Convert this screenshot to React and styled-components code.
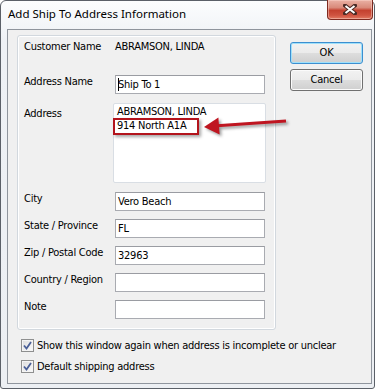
import React from "react";
import styled, { createGlobalStyle } from "styled-components";

const Global = createGlobalStyle`
  html, body { margin: 0; padding: 0; background: #ffffff; }
  body { width: 380px; height: 392px; overflow: hidden; }
`;

const ui = `"DejaVu Sans Condensed", "DejaVu Sans", sans-serif`;

const Window = styled.div`
  box-sizing: border-box;
  width: 375px;
  height: 389px;
  border: 1px solid #5b6068;
  border-radius: 6px 6px 3px 3px;
  background: linear-gradient(#fcfdfe, #eef1f5 40px, #eceff3);
  padding: 0 2px 4px 6px;
  display: flex;
  flex-direction: column;
  font-family: ${ui};
  font-stretch: condensed;
  font-size: 11px;
  letter-spacing: -0.25px;
  color: #000;
`;

const TitleBar = styled.div`
  height: 28px;
  flex: none;
  display: flex;
  justify-content: space-between;
  align-items: flex-start;
`;

const Title = styled.div`
  font-family: "Noto Sans", "Open Sans", sans-serif;
  font-stretch: normal;
  font-size: 11.5px;
  letter-spacing: 0;
  line-height: 16px;
  padding: 5px 0 0 1px;
  color: #000;
`;

const CloseButton = styled.div`
  box-sizing: border-box;
  width: 46px;
  height: 20px;
  margin: -1px -1px 0 0;
  border: 1px solid #7e2a20;
  border-top: none;
  border-radius: 0 0 4px 4px;
  background: linear-gradient(#eab1a4 0%, #d98a7a 40%, #c4412f 55%, #cf5340 80%, #e27a63 100%);
  box-shadow: inset 0 0 0 1px rgba(255, 220, 210, 0.45);
  display: flex;
  align-items: center;
  justify-content: center;
`;

const Client = styled.div`
  flex: 1;
  border: 1px solid #8f959d;
  background: #f0f0f0;
  padding: 5px 0 0 9px;
  display: flex;
  flex-direction: column;
`;

const TopRow = styled.div`
  display: flex;
  align-items: flex-start;
`;

const Panel = styled.div`
  position: relative;
  box-sizing: border-box;
  width: 259px;
  height: 295px;
  border: 1px solid #d2d8de;
  border-radius: 3px;
  box-shadow: inset 0 0 0 1px #ffffff;
  padding: 4px 0 0 6px;
  display: grid;
  grid-template-columns: 91px 150px;
  row-gap: 8px;
  align-content: start;
`;

const Label = styled.div`
  line-height: 14px;
  padding-top: ${(p) => p.$offset || 0}px;
  white-space: nowrap;
`;

const Value = styled.div`
  line-height: 14px;
  white-space: nowrap;
`;

const Spacer = styled.div`
  grid-column: 1 / span 2;
  height: 5px;
`;

const Field = styled.div`
  box-sizing: border-box;
  height: 19px;
  border: 1px solid #a9abb1;
  border-top-color: #9a9ca2;
  background: #ffffff;
  padding: 0 2px;
  line-height: 17px;
  white-space: nowrap;
  display: flex;
  align-items: center;
`;

const Caret = styled.span`
  display: inline-block;
  width: 1px;
  height: 13px;
  background: #000;
  margin-right: -1px;
`;

const Memo = styled.div`
  box-sizing: border-box;
  height: 80px;
  margin: 1px 0 1px -2px;
  width: 153px;
  border: 1px solid #d9dee4;
  border-radius: 2px;
  background: #ffffff;
  padding: 1px 3px;
  line-height: 14px;
`;

const Highlight = styled.div`
  position: absolute;
  left: 95px;
  top: 82px;
  width: 86px;
  height: 17px;
  box-sizing: border-box;
  border: 2px solid #b3141c;
  box-shadow: 2px 2px 3px rgba(0, 0, 0, 0.35);
`;

const Arrow = styled.svg`
  position: absolute;
  left: 182px;
  top: 74px;
  overflow: visible;
  filter: drop-shadow(2px 2px 1.5px rgba(0, 0, 0, 0.4));
`;

const ButtonColumn = styled.div`
  margin: 7px 0 0 14px;
  display: flex;
  flex-direction: column;
  gap: 5px;
`;

const Button = styled.div`
  box-sizing: border-box;
  width: 73px;
  height: 22px;
  border: 1px solid ${(p) => (p.$default ? "#3c8fd0" : "#707070")};
  border-radius: 3px;
  background: linear-gradient(#f2f2f2 0%, #ebebeb 48%, #dddddd 52%, #cfcfcf 100%);
  box-shadow: inset 0 0 0 1px ${(p) => (p.$default ? "#9fe0fa" : "#fbfbfb")};
  display: flex;
  align-items: center;
  justify-content: center;
  line-height: 14px;
`;

const Checks = styled.div`
  margin: 5px 0 0 4px;
  display: flex;
  flex-direction: column;
`;

const CheckRow = styled.div`
  height: 21px;
  display: flex;
  align-items: center;
  gap: 3px;
  white-space: nowrap;
`;

const Box = styled.div`
  box-sizing: border-box;
  width: 13px;
  height: 13px;
  border: 1px solid #8e8f8f;
  background: linear-gradient(135deg, #dcdcdc, #fbfbfb);
  box-shadow: inset 0 0 0 1px #f4f4f4;
  display: flex;
  align-items: center;
  justify-content: center;
`;

function Check() {
  return (
    <Box>
      <svg width="9" height="9" viewBox="0 0 9 9">
        <path d="M1 4.5 L3.5 7.5 L8 1" fill="none" stroke="#4a5f97" strokeWidth="1.8" />
      </svg>
    </Box>
  );
}

const labels = ["City", "State / Province", "Zip / Postal Code", "Country / Region", "Note"];
const values = ["Vero Beach", "FL", "32963", "", ""];

export default function App() {
  return (
    <>
      <Global />
      <Window>
        <TitleBar>
          <Title>Add Ship To Address Information</Title>
          <CloseButton>
            <svg width="14" height="11" viewBox="0 0 14 11">
              <path d="M2 1.5 L12 9.5 M12 1.5 L2 9.5" stroke="#4a2a25" strokeWidth="4" strokeLinecap="square" />
              <path d="M2.5 2 L11.5 9 M11.5 2 L2.5 9" stroke="#ffffff" strokeWidth="2" />
            </svg>
          </CloseButton>
        </TitleBar>
        <Client>
          <TopRow>
            <Panel>
              <Label>Customer Name</Label>
              <Value>ABRAMSON, LINDA</Value>
              <Spacer />
              <Label>Address Name</Label>
              <Field>
                <Caret />
                Ship To 1
              </Field>
              <Label $offset={5}>Address</Label>
              <Memo>
                ABRAMSON, LINDA
                <br />
                914 North A1A
              </Memo>
              {labels.map((l, i) => (
                <React.Fragment key={l}>
                  <Label>{l}</Label>
                  <Field>{values[i]}</Field>
                </React.Fragment>
              ))}
              <Highlight />
              <Arrow width="92" height="32" viewBox="0 0 92 32">
                <line x1="17" y1="15.8" x2="86" y2="11" stroke="#bf1520" strokeWidth="3" />
                <polygon points="4,17 19.6,24.5 18.4,7.5" fill="#bf1520" />
              </Arrow>
            </Panel>
            <ButtonColumn>
              <Button $default>OK</Button>
              <Button>Cancel</Button>
            </ButtonColumn>
          </TopRow>
          <Checks>
            <CheckRow>
              <Check />
              Show this window again when address is incomplete or unclear
            </CheckRow>
            <CheckRow>
              <Check />
              Default shipping address
            </CheckRow>
          </Checks>
        </Client>
      </Window>
    </>
  );
}
